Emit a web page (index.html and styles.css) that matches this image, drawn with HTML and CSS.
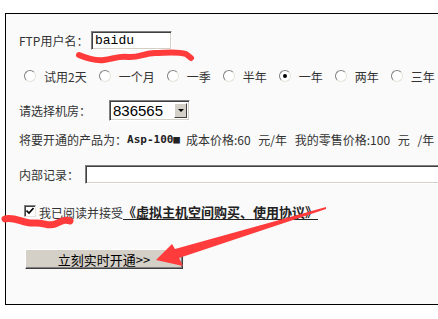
FILE: index.html
```html
<!DOCTYPE html>
<html lang="zh-CN">
<head>
  <meta charset="UTF-8">
  <title>开通虚拟主机</title>
  <link rel="stylesheet" href="styles.css">
</head>
<body>

  <div class="panel">
    <div class="row row-user">
      <span class="label label-user">FTP用户名：</span>
      <input class="text-input user-input" type="text" value="baidu">
    </div>

    <div class="row row-period">
      <span class="radio"></span><span class="opt">试用2天</span>
      <span class="radio"></span><span class="opt">一个月</span>
      <span class="radio"></span><span class="opt">一季</span>
      <span class="radio"></span><span class="opt">半年</span>
      <span class="radio checked"></span><span class="opt">一年</span>
      <span class="radio"></span><span class="opt">两年</span>
      <span class="radio"></span><span class="opt">三年</span>
    </div>

    <div class="row row-room">
      <span class="label label-room">请选择机房：</span>
      <div class="select">
        <span class="select-value">836565</span>
        <span class="select-btn"><span class="select-tri"></span></span>
      </div>
    </div>

    <div class="row row-product">
      <span>将要开通的产品为：</span><b class="product">Asp-100■</b><span class="price">成本价格:60 元/年 我的零售价格:100 元 /年</span>
    </div>

    <div class="row row-note">
      <span class="label">内部记录：</span>
      <input class="text-input note-input" type="text">
    </div>

    <div class="row row-agree">
      <span class="checkbox">
        <svg width="8" height="8" viewBox="0 0 8 8"><path d="M0.5 3.5 L3 6 L7.5 1" fill="none" stroke="#000" stroke-width="1.6"/></svg>
      </span>
      <span class="agree-text">我已阅读并接受</span><a class="agree-link" href="#">《虚拟主机空间购买、使用协议》</a>
    </div>

    <div class="row row-submit">
      <button class="submit-btn">立刻实时开通&gt;&gt;</button>
    </div>
  </div>

  <!-- 红色标注 -->
  <svg class="marks" width="438" height="319" viewBox="0 0 438 319">
    <path d="M79,55 C86,58 95,61 104,60 S118,56 128,57 S145,53 155,53 S176,51 186,54 L191,58" fill="none" stroke="#ff3b3b" stroke-width="6" stroke-linecap="round" stroke-linejoin="round"/>
    <path d="M5,219 C14,216 24,224 34,223 S48,227 55,224 S65,219 70,221" fill="none" stroke="#ff3b3b" stroke-width="7" stroke-linecap="round" stroke-linejoin="round"/>
    <polygon points="326,207 175,249 172,244 156,260 183,266 179,258 326,209" fill="#ff3b3b"/>
  </svg>

</body>
</html>
```

FILE: styles.css
```css
html {
  overflow: hidden;
}

body {
  margin: 0;
  background-color: #fff;
  font-family: 'Noto Sans CJK SC', sans-serif;
  font-size: 12px;
  color: #333;
  position: relative;
}

.panel {
  box-sizing: border-box;
  margin: 13px 0 0 5px;
  width: 480px;
  height: 292px;
  border: 1px solid #000;
  background-color: #fafafa;
  padding-left: 13px;
  padding-top: 17px;
}

.row {
  display: flex;
  align-items: center;
  white-space: nowrap;
}

.row-user {
  height: 19px;
}

.label-user {
  width: 72px;
}

.text-input {
  box-sizing: border-box;
  margin: 0;
  height: 19px;
  border: 1px solid;
  border-color: #808080 #fff #fff #808080;
  box-shadow: inset 1px 1px #404040, inset -1px -1px #d4d0c8;
  background-color: #fff;
  padding: 0 3px;
  outline: none;
}

.user-input {
  width: 81px;
  font-family: 'Liberation Mono', monospace;
  font-size: 13px;
  color: #000;
}

.row-period {
  margin-top: 16px;
  height: 20px;
  padding-left: 5px;
}

.radio {
  box-sizing: border-box;
  flex: none;
  width: 12px;
  height: 12px;
  border-radius: 50%;
  border: 1px solid;
  border-color: #808080 #e6e3dd #e6e3dd #808080;
  background-color: #fff;
  display: flex;
  align-items: center;
  justify-content: center;
}

.radio.checked::after {
  content: "";
  width: 4px;
  height: 4px;
  border-radius: 50%;
  background-color: #000;
}

.opt {
  margin-left: 8px;
  margin-right: 12px;
}

.row-room {
  margin-top: 14px;
  height: 21px;
}

.label-room {
  width: 90px;
}

.select {
  box-sizing: border-box;
  width: 81px;
  height: 21px;
  border: 1px solid;
  border-color: #808080 #fff #fff #808080;
  box-shadow: inset 1px 1px #404040, inset -1px -1px #d4d0c8;
  background-color: #fff;
  display: flex;
  align-items: center;
  justify-content: space-between;
  padding: 0 2px 0 3px;
}

.select-value {
  font-family: 'Liberation Sans', sans-serif;
  font-size: 15px;
  color: #000;
}

.select-btn {
  box-sizing: border-box;
  width: 13px;
  height: 15px;
  background-color: #d4d0c8;
  border: 1px solid;
  border-color: #fff #404040 #404040 #fff;
  display: flex;
  align-items: center;
  justify-content: center;
}

.select-tri {
  width: 0;
  height: 0;
  border-left: 3px solid transparent;
  border-right: 3px solid transparent;
  border-top: 3px solid #000;
}

.row-product {
  margin-top: 10px;
  height: 16px;
}

.product {
  font-family: 'DejaVu Sans Mono', monospace;
  font-size: 11px;
  color: #222;
  margin-right: 6px;
}

.price {
  word-spacing: 5px;
}

.row-note {
  margin-top: 18px;
  height: 19px;
}

.row-note .label {
  width: 66px;
}

.note-input {
  width: 380px;
}

.row-agree {
  margin-top: 20px;
  height: 16px;
  padding-left: 5px;
}

.checkbox {
  box-sizing: border-box;
  width: 12px;
  height: 12px;
  border: 1px solid;
  border-color: #808080 #e6e3dd #e6e3dd #808080;
  box-shadow: inset 1px 1px #404040;
  background-color: #fff;
  display: flex;
  align-items: center;
  justify-content: center;
  margin-top: -3px;
}

.agree-text {
  margin-left: 3px;
}

.agree-link {
  font-size: 13px;
  font-weight: bold;
  color: #222;
  text-decoration: none;
  border-bottom: 1px solid #222;
  line-height: 15px;
}

.row-submit {
  margin-top: 29px;
  padding-left: 6px;
}

.submit-btn {
  box-sizing: border-box;
  width: 158px;
  height: 20px;
  margin: 0;
  padding: 0;
  background-color: #d4d0c8;
  border: 1px solid;
  border-color: #fff #404040 #404040 #fff;
  box-shadow: inset -1px -1px #808080;
  font-family: 'Noto Sans CJK SC', sans-serif;
  font-size: 13px;
  color: #000;
  cursor: pointer;
}

.marks {
  position: absolute;
  left: 0;
  top: 0;
  pointer-events: none;
}
```
